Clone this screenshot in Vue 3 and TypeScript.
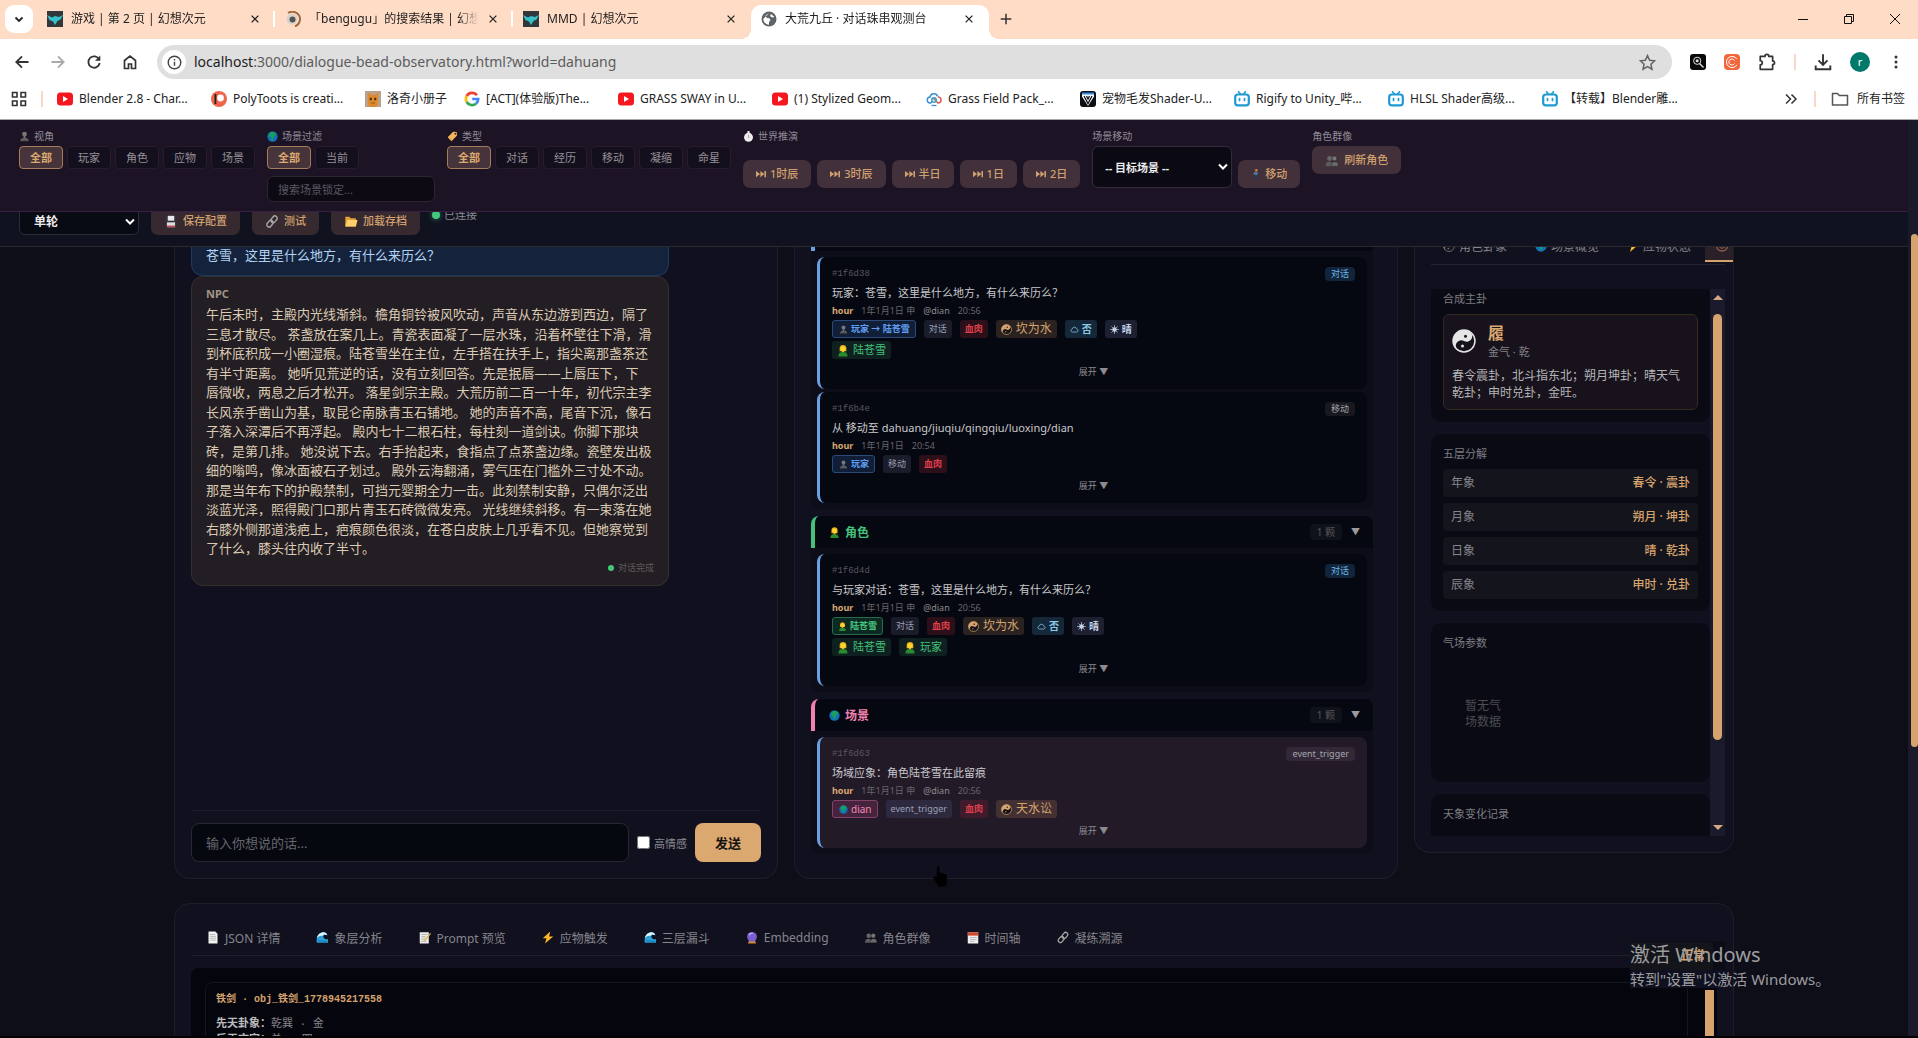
<script setup lang="ts">
interface BrowserTab { title: string; icon: string; active?: boolean }
interface Bookmark { title: string; icon: string; short?: boolean }
interface Chip { text: string; kind: string; icon?: string }
interface Bead {
  id: string
  tag: string
  tagKind: string
  title: string
  date: string
  place?: string
  time: string
  rows: Chip[][]
  scene?: boolean
}
interface BeadGroup { name: string; kind: string; icon?: string; count: string; beads: Bead[] }

const tabs: BrowserTab[] = [
  { title: '游戏 | 第 2 页 | 幻想次元', icon: 'fav-fish' },
  { title: '「bengugu」的搜索结果 | 幻想次元', icon: 'fav-swirl' },
  { title: 'MMD | 幻想次元', icon: 'fav-fish' },
  { title: '大荒九丘 · 对话珠串观测台', icon: 'fav-globe', active: true },
]

const bookmarks: Bookmark[] = [
  { title: 'Blender 2.8 - Char...', icon: 'bm-yt' },
  { title: 'PolyToots is creati...', icon: 'bm-patreon' },
  { title: '洛奇小册子', icon: 'bm-cat', short: true },
  { title: '[ACT](体验版)The...', icon: 'bm-google' },
  { title: 'GRASS SWAY in U...', icon: 'bm-yt' },
  { title: '(1) Stylized Geom...', icon: 'bm-yt' },
  { title: 'Grass Field Pack_...', icon: 'bm-cloud' },
  { title: '宠物毛发Shader-U...', icon: 'bm-shield' },
  { title: 'Rigify to Unity_哔...', icon: 'bm-bili' },
  { title: 'HLSL Shader高级...', icon: 'bm-bili' },
  { title: '【转载】Blender雕...', icon: 'bm-bili' },
]

const views = ['全部', '玩家', '角色', '应物', '场景']
const sceneFilters = ['全部', '当前']
const types = ['全部', '对话', '经历', '移动', '凝缩', '命星']
const steps = ['1时辰', '3时辰', '半日', '1日', '2日']

const story = `午后未时，主殿内光线渐斜。檐角铜铃被风吹动，声音从东边游到西边，隔了
三息才散尽。 茶盏放在案几上。青瓷表面凝了一层水珠，沿着杯壁往下滑，滑
到杯底积成一小圈湿痕。陆苍雪坐在主位，左手搭在扶手上，指尖离那盏茶还
有半寸距离。 她听见荒逆的话，没有立刻回答。先是抿唇——上唇压下，下
唇微收，两息之后才松开。 落星剑宗主殿。大荒历前二百一十年，初代宗主李
长风亲手凿山为基，取昆仑南脉青玉石铺地。 她的声音不高，尾音下沉，像石
子落入深潭后不再浮起。 殿内七十二根石柱，每柱刻一道剑诀。你脚下那块
砖，是第几排。 她没说下去。右手抬起来，食指点了点茶盏边缘。瓷壁发出极
细的嗡鸣，像冰面被石子划过。 殿外云海翻涌，雾气压在门槛外三寸处不动。
那是当年布下的护殿禁制，可挡元婴期全力一击。此刻禁制安静，只偶尔泛出
淡蓝光泽，照得殿门口那片青玉石砖微微发亮。 光线继续斜移。有一束落在她
右膝外侧那道浅疤上，疤痕颜色很淡，在苍白皮肤上几乎看不见。但她察觉到
了什么，膝头往内收了半寸。`

const groups: BeadGroup[] = [
  {
    name: '', kind: 'player', count: '', beads: [
      {
        id: '#1f6d38', tag: '对话', tagKind: 'talk', title: '玩家：苍雪，这里是什么地方，有什么来历么？',
        date: '1年1月1日 申', place: '@dian', time: '20:56',
        rows: [
          [
            { text: '玩家 → 陆苍雪', kind: 'blue', icon: 'bust' },
            { text: '对话', kind: 'plain' },
            { text: '血肉', kind: 'red' },
            { text: '坎为水', kind: 'gold', icon: 'yinyang' },
            { text: '否', kind: 'sky', icon: 'cloud' },
            { text: '晴', kind: 'sun', icon: 'sun' },
          ],
          [{ text: '陆苍雪', kind: 'leaf', icon: 'person' }],
        ],
      },
      {
        id: '#1f6b4e', tag: '移动', tagKind: 'move', title: '从 移动至 dahuang/jiuqiu/qingqiu/luoxing/dian',
        date: '1年1月1日', time: '20:54',
        rows: [[
          { text: '玩家', kind: 'blue', icon: 'bust' },
          { text: '移动', kind: 'plain' },
          { text: '血肉', kind: 'red' },
        ]],
      },
    ],
  },
  {
    name: '角色', kind: 'role', icon: 'person', count: '1 颗', beads: [
      {
        id: '#1f6d4d', tag: '对话', tagKind: 'talk', title: '与玩家对话：苍雪，这里是什么地方，有什么来历么？',
        date: '1年1月1日 申', place: '@dian', time: '20:56',
        rows: [
          [
            { text: '陆苍雪', kind: 'green', icon: 'person' },
            { text: '对话', kind: 'plain' },
            { text: '血肉', kind: 'red' },
            { text: '坎为水', kind: 'gold', icon: 'yinyang' },
            { text: '否', kind: 'sky', icon: 'cloud' },
            { text: '晴', kind: 'sun', icon: 'sun' },
          ],
          [
            { text: '陆苍雪', kind: 'leaf', icon: 'person' },
            { text: '玩家', kind: 'leaf', icon: 'person' },
          ],
        ],
      },
    ],
  },
  {
    name: '场景', kind: 'place', icon: 'globe', count: '1 颗', beads: [
      {
        id: '#1f6d63', tag: 'event_trigger', tagKind: 'event', title: '场域应象：角色陆苍雪在此留痕',
        date: '1年1月1日 申', place: '@dian', time: '20:56', scene: true,
        rows: [[
          { text: 'dian', kind: 'pink', icon: 'globe' },
          { text: 'event_trigger', kind: 'plain' },
          { text: '血肉', kind: 'red' },
          { text: '天水讼', kind: 'gold', icon: 'yinyang' },
        ]],
      },
    ],
  },
]

const layers = [
  { name: '年象', value: '春令 · 震卦' },
  { name: '月象', value: '朔月 · 坤卦' },
  { name: '日象', value: '晴 · 乾卦' },
  { name: '辰象', value: '申时 · 兑卦' },
]

const detailTabs = [
  { title: 'JSON 详情', icon: 'page' },
  { title: '象层分析', icon: 'wave' },
  { title: 'Prompt 预览', icon: 'memo' },
  { title: '应物触发', icon: 'bolt' },
  { title: '三层漏斗', icon: 'wave' },
  { title: 'Embedding', icon: 'crystal' },
  { title: '角色群像', icon: 'busts' },
  { title: '时间轴', icon: 'calendar' },
  { title: '凝练溯源', icon: 'link' },
]
</script>

<template>
  <div class="window">
    <svg class="sprite" aria-hidden="true">
      <symbol id="bust" viewBox="0 0 16 16"><circle cx="8" cy="4.5" r="3.5" fill="#777"/><path d="M6.5 7h3v3h-3z" fill="#777"/><path d="M2 15c0-4 2-5 6-5s6 1 6 5z" fill="#666"/><path d="M4 14.5h8" stroke="#222" stroke-width="1"/></symbol>
      <symbol id="busts" viewBox="0 0 16 16"><circle cx="5" cy="5.5" r="3" fill="#666"/><circle cx="11" cy="5.5" r="3" fill="#777" stroke="#222" stroke-width=".6"/><path d="M0 15c0-4 1.500-5.500 4.500-5.500S9 11 9 15z" fill="#5c5c5c"/><path d="M7 15c0-4 1.500-5.500 4.500-5.500S16 11 16 15z" fill="#6c6c6c" stroke="#222" stroke-width=".6"/></symbol>
      <symbol id="globe" viewBox="0 0 16 16"><circle cx="8" cy="8" r="7.500" fill="#1272b8"/><path d="M4 2.500c3-1.800 7-1 9 1.500l-1 3-2 1-1 4-2 2-1-5-3-2z" fill="#19a05a"/></symbol>
      <symbol id="tag" viewBox="0 0 16 16"><path d="M9 1l5 .5.5 5L6.500 15 1 9z" fill="#f5b75c"/><circle cx="12" cy="4" r="1.300" fill="#3a2630"/><path d="M4 9l3 3" stroke="#d88f3c" stroke-width="1.200"/></symbol>
      <symbol id="watch" viewBox="0 0 16 16"><path d="M6.500 0h3v3h-3z" fill="#eee"/><circle cx="8" cy="9.200" r="6.500" fill="#eee"/><path d="M8 5.500v4M8 9.500h1.500" stroke="#888" stroke-width="1"/></symbol>
      <symbol id="next" viewBox="0 0 16 16"><path d="M0 3l6.500 5L0 13zM7 3l6.500 5L7 13zM13.500 3H16v10h-2.500z" fill="currentColor"/></symbol>
      <symbol id="walk" viewBox="0 0 16 16"><circle cx="8.500" cy="2" r="1.900" fill="#d58a3c"/><path d="M6.500 4.500h4L10.500 10h-4z" fill="#2c7fc4"/><path d="M7 10L5.500 15.500M9.500 10l1.800 5.500" stroke="#26384f" stroke-width="2"/><path d="M6.500 5l-2 4" stroke="#d58a3c" stroke-width="1.400"/></symbol>
      <symbol id="floppy" viewBox="0 0 16 16"><path d="M1 1h12l2 2v12H1z" fill="#32303c"/><path d="M4 1h8v6H4z" fill="#e8e8e8"/><path d="M3 9h10v6H3z" fill="#dcdcdc"/><path d="M3 13h10v2H3z" fill="#c04b5a"/></symbol>
      <symbol id="link" viewBox="0 0 16 16"><g fill="none" stroke="#a9a9a9" stroke-width="1.700"><rect x="-2.800" y="-4.500" width="5.600" height="9" rx="2.800" transform="translate(10.500 5.300) rotate(40)"/><rect x="-2.800" y="-4.500" width="5.600" height="9" rx="2.800" transform="translate(5.500 10.700) rotate(40)"/></g></symbol>
      <symbol id="folder" viewBox="0 0 16 16"><path d="M1 2h5l1.500 2H14v10H1z" fill="#e2a138"/><path d="M3.500 6H16l-2 8H1z" fill="#ffd06b"/></symbol>
      <symbol id="yinyang" viewBox="0 0 16 16"><circle cx="8" cy="8" r="7.300" fill="#17131a" stroke="currentColor" stroke-width="1"/><path d="M8 .7a7.300 7.300 0 0 0 0 14.600 3.650 3.650 0 0 1 0-7.300A3.650 3.650 0 0 0 8 .7z" fill="currentColor" transform="rotate(30 8 8)"/><circle cx="9" cy="4.800" r="1" fill="#17131a"/><circle cx="7" cy="11.400" r="1" fill="currentColor"/></symbol>
      <symbol id="cloud" viewBox="0 0 16 16"><path d="M4 12.500a2.800 2.800 0 0 1 0-5.500 4 4 0 0 1 7.800 0 2.800 2.800 0 0 1 .5 5.500z" fill="none" stroke="currentColor" stroke-width="1.300"/></symbol>
      <symbol id="sun" viewBox="0 0 16 16"><circle cx="8" cy="8" r="4" fill="currentColor"/><path d="M8 0v16M0 8h16M2.500 2.500l11 11M13.500 2.500l-11 11" stroke="currentColor" stroke-width="1.200"/></symbol>
      <symbol id="person" viewBox="0 0 16 16"><path d="M3.500 5a4.500 4.500 0 0 1 9 0v4h-9z" fill="#e8a812"/><circle cx="8" cy="5.600" r="3.400" fill="#ffd735"/><path d="M6.700 8h2.600v3H6.700z" fill="#f2c52c"/><path d="M2 16c0-4.500 2-6 6-6s6 1.500 6 6z" fill="#2b8a2e"/></symbol>
      <symbol id="page" viewBox="0 0 16 16"><path d="M2 0h9l3 3v13H2z" fill="#f1f1f1"/><path d="M4 4h7M4 6.500h8M4 9h8M4 11.500h8" stroke="#a9a9a9" stroke-width="1"/></symbol>
      <symbol id="wave" viewBox="0 0 16 16"><path d="M1 15C0 7 4 1 10 1c3 0 5 2 5 4-3-2-6 0-5 3 1 2 4 3 6 2v5z" fill="#2a9fd8"/><path d="M1 9c1-5 5-8 9-8 3 0 5 2 5 4-3-2-6-1-6 1-3-1-6 0-8 3z" fill="#dff3fb"/><path d="M3 13c3-1 9 1 12 0" stroke="#1577b0" stroke-width="1.300" fill="none"/></symbol>
      <symbol id="memo" viewBox="0 0 16 16"><path d="M1 1h12v15H1z" fill="#eee"/><path d="M3 4h8M3 7h6M3 10h5M3 13h7" stroke="#999" stroke-width="1"/><path d="M15 2l-8 9-.5 2L9 12l7-9z" fill="#e9b24a"/></symbol>
      <symbol id="bolt" viewBox="0 0 16 16"><path d="M11 0L1 9h5l-2 7 11-9.500H9.500z" fill="#ffb829"/></symbol>
      <symbol id="crystal" viewBox="0 0 16 16"><path d="M4 12h8l1.500 4h-11z" fill="#c8873c"/><circle cx="8" cy="7" r="6.500" fill="#7a5fd0"/><path d="M4 5c1-2 3-3 5-2.500" stroke="#c9b8ff" stroke-width="1.500" fill="none"/></symbol>
      <symbol id="calendar" viewBox="0 0 16 16"><path d="M1 1h14v15H1z" fill="#eee"/><path d="M1 1h14v4.500H1z" fill="#d1492c"/><path d="M4 8h9M4 10.500h9M4 13h6" stroke="#bbb" stroke-width="1.300"/></symbol>

      <symbol id="fav-fish" viewBox="0 0 16 16"><path d="M0 0h16v16H0z" fill="#31383c"/><path d="M0 4l5 2.500L8 5l4 1 4-2-2.500 4.500-3 1.500L8 14l-2-3.500L2.500 9z" fill="#35c1c9"/></symbol>
      <symbol id="fav-swirl" viewBox="0 0 16 16"><circle cx="7" cy="8" r="5.500" fill="#d8d2cc"/><circle cx="7.500" cy="8.500" r="3" fill="#555"/><path d="M3 2C8-1 15 2 15 8c0 3-2 6-5 7.500" fill="none" stroke="#a5673b" stroke-width="2"/></symbol>
      <symbol id="fav-globe" viewBox="0 0 16 16"><circle cx="8" cy="8" r="7.500" fill="#5f6368"/><path d="M8 2.200c-1 1-3 1-3.500 3L6 7h2l1.500 2L8 11v2.800A6 6 0 0 1 2.200 8M10 3l-1 2 2 1.500 2.500-.5" fill="#fff"/></symbol>
      <symbol id="bm-yt" viewBox="0 0 16 16"><rect y="1.500" width="16" height="13" rx="3.500" fill="#f4171f"/><path d="M6 5l5 3-5 3z" fill="#fff"/></symbol>
      <symbol id="bm-patreon" viewBox="0 0 16 16"><circle cx="8" cy="8" r="8" fill="#f0644b"/><circle cx="9.500" cy="7" r="3.400" fill="#fff"/><path d="M3.500 3h1.800v10H3.500z" fill="#222"/></symbol>
      <symbol id="bm-cat" viewBox="0 0 16 16"><path d="M0 0h16v16H0z" fill="#b9a28b"/><path d="M3 1l3 3h4l3-3v13l-3 2H5l-2-2z" fill="#dd8a2c"/><path d="M5 7h1.500v2H5zM9.500 7H11v2H9.500zM6 12h4" fill="#4b2b12" stroke="#4b2b12" stroke-width=".5"/></symbol>
      <symbol id="bm-google" viewBox="0 0 16 16"><g fill="none" stroke-width="2.700"><path d="M13 4.200A6.200 6.200 0 0 0 2.700 5" stroke="#ea4335"/><path d="M2.700 5a6.300 6.300 0 0 0 0 6" stroke="#fbbc05"/><path d="M2.700 11A6.200 6.200 0 0 0 12 12.700" stroke="#34a853"/><path d="M12 12.700A6 6 0 0 0 14.200 8H8.200" stroke="#4285f4"/></g></symbol>
      <symbol id="bm-cloud" viewBox="0 0 16 16"><g fill="none" stroke-width="1.500"><path d="M7 10L4.500 12A3 3 0 0 1 4 6a4 4 0 0 1 7.700-.5" stroke="#3a8fd6"/><path d="M12 6a3 3 0 0 1 0 6L7 7" stroke="#e0565b"/><circle cx="8" cy="9" r="2.300" stroke="#35a3c5"/></g><path d="M5.500 14.500h5" stroke="#3a8fd6" stroke-width="1.300"/></symbol>
      <symbol id="bm-shield" viewBox="0 0 16 16"><rect width="16" height="16" rx="3" fill="#0c0f14"/><path d="M2 2.500h12v3L8 15 2 5.500z" fill="#fff"/><path d="M2 1.500h12v2H2z" fill="#2f89d6"/><path d="M4 5l4 7.500L12 5M6.500 5L8 8l1.500-3" fill="none" stroke="#0c0f14" stroke-width="1.300"/></symbol>
      <symbol id="bm-bili" viewBox="0 0 16 16"><path d="M4.500.8L6.500 3M11.500.8L9.500 3" stroke="#1d9bd1" stroke-width="1.600" stroke-linecap="round"/><rect x="1.200" y="3.500" width="13.600" height="10.800" rx="2.600" fill="none" stroke="#1d9bd1" stroke-width="2.200"/><path d="M5.500 7.500v2M10.500 7.500v2" stroke="#1d9bd1" stroke-width="1.700" stroke-linecap="round"/></symbol>
    </svg>

    <div class="tabstrip">
      <button class="tabsearch" aria-label="搜索标签页"><svg viewBox="0 0 16 16"><path d="M4.500 6.500L8 10l3.500-3.500" fill="none" stroke="#222" stroke-width="1.800"/></svg></button>
      <div v-for="(t, i) in tabs" :key="i" class="tab" :class="{ active: t.active, divided: i < 2 }">
        <svg class="fav"><use :href="'#' + t.icon" /></svg>
        <span class="tab-title">{{ t.title }}</span>
        <button class="tab-close" aria-label="关闭"><svg viewBox="0 0 16 16"><path d="M3.500 3.500l9 9M12.500 3.500l-9 9" stroke="#222" stroke-width="1.700"/></svg></button>
      </div>
      <button class="newtab" aria-label="新标签页"><svg viewBox="0 0 16 16"><path d="M8 2v12M2 8h12" stroke="#333" stroke-width="1.700"/></svg></button>
      <div class="wincontrols">
        <button aria-label="最小化"><svg viewBox="0 0 12 12"><path d="M1 6.500h10" stroke="#111" stroke-width="1"/></svg></button>
        <button aria-label="还原"><svg viewBox="0 0 12 12"><path d="M1.500 3.500h7v7h-7zM3.500 3.500v-2h7v7h-2" fill="none" stroke="#111" stroke-width="1"/></svg></button>
        <button aria-label="关闭窗口"><svg viewBox="0 0 12 12"><path d="M1 1l10 10M11 1L1 11" stroke="#111" stroke-width="1"/></svg></button>
      </div>
    </div>

    <div class="toolbar">
      <button class="nav" aria-label="后退"><svg viewBox="0 0 16 16"><path d="M14.500 8H2.500M8 2.300L2.300 8 8 13.700" fill="none" stroke="#333" stroke-width="1.800"/></svg></button>
      <button class="nav" aria-label="前进"><svg viewBox="0 0 16 16"><path d="M1.500 8h12M8 2.300L13.700 8 8 13.700" fill="none" stroke="#aaa" stroke-width="1.800"/></svg></button>
      <button class="nav" aria-label="刷新"><svg viewBox="0 0 16 16"><path d="M13.200 5.500A5.700 5.700 0 1 0 13.700 9" fill="none" stroke="#333" stroke-width="1.800"/><path d="M14.300 1.500v5.300H9z" fill="#333"/></svg></button>
      <button class="nav" aria-label="主页"><svg viewBox="0 0 16 16"><path d="M2.500 6.500L8 2l5.500 4.500v8h-4V10h-3v4.500h-4z" fill="none" stroke="#333" stroke-width="1.700"/></svg></button>
      <div class="urlbar">
        <span class="info"><svg viewBox="0 0 16 16"><circle cx="8" cy="8" r="6.700" fill="none" stroke="#444" stroke-width="1.500"/><path d="M8 7.200v4.300M8 4.300v1.600" stroke="#444" stroke-width="1.500"/></svg></span>
        <span class="url"><b>localhost</b>:3000/dialogue-bead-observatory.html?world=dahuang</span>
        <svg class="star" viewBox="0 0 16 16"><path d="M8 1.500l2 4.400 4.700.5-3.500 3.200 1 4.700L8 11.900l-4.200 2.400 1-4.700L1.300 6.400 6 5.900z" fill="none" stroke="#5f6368" stroke-width="1.400"/></svg>
      </div>
      <div class="exts">
        <svg viewBox="0 0 16 16"><rect width="16" height="16" rx="3" fill="#090909"/><circle cx="7.200" cy="6.800" r="3.600" fill="none" stroke="#ddd"/><circle cx="7.200" cy="6.800" r="1.500" fill="#ddd"/><path d="M9.500 9.500l4 4" stroke="#ddd" stroke-width="1.500"/></svg>
        <svg viewBox="0 0 16 16"><rect width="16" height="16" rx="4" fill="#f2683c"/><path d="M12.800 5a5.600 5.600 0 1 0 0 6" fill="none" stroke="#fff"/><path d="M10.500 6.500a3 3 0 1 0 0 3" fill="none" stroke="#fff"/></svg>
        <svg class="big" viewBox="0 0 16 16"><path d="M2 3h4.200a1.700 1.700 0 0 1 3.400 0H13v4a1.700 1.700 0 0 1 0 3.400V14.500H2v-4a1.800 1.800 0 0 0 0-3.600z" fill="none" stroke="#333" stroke-width="1.500" stroke-linejoin="round"/></svg>
        <i class="vsep"></i>
        <svg class="big" viewBox="0 0 16 16"><path d="M8 1v9M4 6.500l4 4 4-4M1.500 11v3.500h13V11" fill="none" stroke="#333" stroke-width="1.700"/></svg>
        <span class="avatar">r</span>
        <svg viewBox="0 0 16 16"><circle cx="8" cy="3" r="1.500" fill="#333"/><circle cx="8" cy="8" r="1.500" fill="#333"/><circle cx="8" cy="13" r="1.500" fill="#333"/></svg>
      </div>
    </div>

    <nav class="bookmarks">
      <svg class="apps" viewBox="0 0 16 16"><path d="M1.500 1.500h4.500v4.500H1.500zM10 1.500h4.500v4.500H10zM1.500 10h4.500v4.500H1.500zM10 10h4.500v4.500H10z" fill="none" stroke="#333" stroke-width="1.600"/></svg>
      <i class="vsep"></i>
      <a v-for="(b, i) in bookmarks" :key="i" href="#" class="bookmark" :class="{ short: b.short }"><svg><use :href="'#' + b.icon" /></svg><span>{{ b.title }}</span></a>
      <div class="bookmarks-end">
        <svg class="more" viewBox="0 0 16 16"><path d="M3 3.500L7.500 8 3 12.500M8.500 3.500L13 8l-4.500 4.500" fill="none" stroke="#333" stroke-width="1.500"/></svg>
        <i class="vsep"></i>
        <a href="#" class="all"><svg viewBox="0 0 18 16"><path d="M1.500 2.500h5l1.800 2h8.200v9.500h-15z" fill="none" stroke="#555" stroke-width="1.500" stroke-linejoin="round"/></svg><span>所有书签</span></a>
      </div>
    </nav>

    <div class="viewport">
      <div class="page">
        <header class="filters">
          <div class="group">
            <div class="label"><svg><use href="#bust" /></svg>视角</div>
            <div class="chips"><button v-for="(v, i) in views" :key="v" class="pick" :class="{ on: i === 0 }">{{ v }}</button></div>
          </div>
          <div class="group">
            <div class="label"><svg><use href="#globe" /></svg>场景过滤</div>
            <div class="chips"><button v-for="(v, i) in sceneFilters" :key="v" class="pick" :class="{ on: i === 0 }">{{ v }}</button></div>
            <input class="search" type="text" placeholder="搜索场景锁定..." aria-label="搜索场景锁定" />
          </div>
          <div class="group">
            <div class="label"><svg><use href="#tag" /></svg>类型</div>
            <div class="chips"><button v-for="(v, i) in types" :key="v" class="pick" :class="{ on: i === 0 }">{{ v }}</button></div>
          </div>
          <div class="group">
            <div class="label"><svg><use href="#watch" /></svg>世界推演</div>
            <div class="actions tall"><button v-for="s in steps" :key="s" class="act"><svg><use href="#next" /></svg>{{ s }}</button></div>
          </div>
          <div class="group">
            <label class="label" for="target">场景移动</label>
            <div class="actions tall">
              <div class="select wide"><select id="target"><option>-- 目标场景 --</option></select><svg viewBox="0 0 10 8"><path d="M1 1.500l4 4 4-4" fill="none" stroke="#fff" stroke-width="2"/></svg></div>
              <button class="act"><svg><use href="#walk" /></svg>移动</button>
            </div>
          </div>
          <div class="group">
            <div class="label">角色群像</div>
            <div class="actions"><button class="act"><svg class="lg"><use href="#busts" /></svg>刷新角色</button></div>
          </div>
        </header>

        <div class="configbar">
          <div class="configrow">
            <div class="select mode"><select aria-label="对话模式"><option>单轮</option></select><svg viewBox="0 0 10 8"><path d="M1 1.500l4 4 4-4" fill="none" stroke="#fff" stroke-width="2"/></svg></div>
            <button class="act"><svg class="lg"><use href="#floppy" /></svg>保存配置</button>
            <button class="act"><svg class="lg"><use href="#link" /></svg>测试</button>
            <button class="act"><svg class="lg"><use href="#folder" /></svg>加载存档</button>
            <span class="status"><i></i>已连接</span>
          </div>
        </div>

        <main>
          <div class="columns">
            <section class="panel chat">
              <div class="bubble user">苍雪，这里是什么地方，有什么来历么？</div>
              <div class="bubble npc">
                <div class="who">NPC</div>
                <p>{{ story }}</p>
                <div class="done"><i></i>对话完成</div>
              </div>
              <form class="composer" @submit.prevent>
                <input class="say" type="text" placeholder="输入你想说的话..." aria-label="对话内容" />
                <label class="emo"><input type="checkbox" />高情感</label>
                <button class="send">发送</button>
              </form>
            </section>

            <section class="panel beads">
              <div v-for="g in groups" :key="g.kind" class="beadgroup" :class="g.kind">
                <div class="ghead">
                  <template v-if="g.name">
                    <svg><use :href="'#' + g.icon" /></svg>
                    <span class="gname">{{ g.name }}</span>
                    <span class="gcount">{{ g.count }}</span>
                    <span class="arrow">▼</span>
                  </template>
                </div>
                <div class="gbody">
                  <article v-for="b in g.beads" :key="b.id" class="bead" :class="{ scene: b.scene }">
                    <div class="bhead"><span class="bid">{{ b.id }}</span><span class="btag" :class="b.tagKind">{{ b.tag }}</span></div>
                    <div class="btitle">{{ b.title }}</div>
                    <div class="bmeta"><b>hour</b><span>{{ b.date }}</span><span v-if="b.place" class="at">{{ b.place }}</span><span>{{ b.time }}</span></div>
                    <div v-for="(row, r) in b.rows" :key="r" class="brow">
                      <span v-for="(c, k) in row" :key="k" class="chip" :class="c.kind"><svg v-if="c.icon"><use :href="'#' + c.icon" /></svg>{{ c.text }}</span>
                    </div>
                    <button class="expand">展开 ▼</button>
                  </article>
                </div>
              </div>
            </section>

            <aside class="panel side">
              <div class="sidetabs">
                <button><svg><use href="#yinyang" /></svg>角色卦象</button>
                <button><svg><use href="#globe" /></svg>场景概览</button>
                <button><svg><use href="#bolt" /></svg>应物状态</button>
                <button class="current" aria-label="天象"><svg viewBox="0 0 16 16"><path d="M1 8c0 9 14 9 14 0" fill="none" stroke="#8d5b4a" stroke-width="2"/><path d="M4 8c2 4 6 4 8 0" fill="none" stroke="#8d5b4a" stroke-width="1.500"/></svg></button>
              </div>
              <div class="scroll">
                <div class="cards">
                  <div class="card first">
                    <h3>合成主卦</h3>
                    <div class="hexagram">
                      <div class="hexhead"><svg><use href="#yinyang" /></svg><div><strong>履</strong><span>金气 · 乾</span></div></div>
                      <p>春令震卦，北斗指东北；朔月坤卦；晴天气乾卦；申时兑卦，金旺。</p>
                    </div>
                  </div>
                  <div class="card">
                    <h3>五层分解</h3>
                    <dl><div v-for="l in layers" :key="l.name"><dt>{{ l.name }}</dt><dd>{{ l.value }}</dd></div></dl>
                  </div>
                  <div class="card field">
                    <h3>气场参数</h3>
                    <p class="empty">暂无气场数据</p>
                  </div>
                  <div class="card last"><h3>天象变化记录</h3></div>
                </div>
                <div class="track"><i class="up"></i><i class="thumb"></i><i class="down"></i></div>
              </div>
            </aside>
          </div>

          <section class="panel detail">
            <div class="detailtabs"><button v-for="d in detailTabs" :key="d.title"><svg><use :href="'#' + d.icon" /></svg>{{ d.title }}</button></div>
            <div class="detailbox">
              <div class="object">
                <div class="oname">铁剑 · obj_铁剑_1778945217558</div>
                <div><b>先天卦象：</b>乾巽 · 金</div>
                <div><b>后天方宫：</b>兑 · 四</div>
              </div>
              <div class="dtrack"><i></i></div>
            </div>
          </section>
        </main>
      </div>
      <div class="pagetrack"><i></i></div>
    </div>

    <svg class="cursor" viewBox="0 0 16 21"><path d="M4 1.500c0-2 2.500-2 2.500 0V8l1-1.500c1 0 1.500.5 1.500 1.500l.5-1c1.500 0 1.800.8 1.800 1.800l.5-.8c1.500 0 2 .8 2 2.500V15c0 2-1 3-1 5.500H5C5 18 1.500 15 .5 12c-.5-2 1.500-2.500 3-.5z" fill="#000"/></svg>

    <div class="overlay">
      <span class="normal">正常</span>
      <div class="mark1">激活 Windows</div>
      <div class="mark2">转到"设置"以激活 Windows。</div>
    </div>
  </div>
</template>

<style>
html, body { margin: 0; background: #000; overflow: hidden; }
</style>

<style scoped>
* { box-sizing: border-box; }
.window { position: relative; display: flex; flex-direction: column; height: 100vh; overflow: hidden; border-bottom: 2px solid #000; background: #0e0e19; color: #bbb; font-family: "Noto Sans", "Noto Sans CJK SC", sans-serif; font-size: 12px; }
button, input, select { font-family: inherit; margin: 0; }
button { border: 0; padding: 0; background: none; color: inherit; cursor: pointer; }
a { color: inherit; text-decoration: none; }
svg { display: block; flex: none; }
.sprite { position: absolute; width: 0; height: 0; }

/* browser frame */
.tabstrip { display: flex; flex: none; height: 39px; padding: 5px 0 0 5px; background: #ffdcc6; color: #222; }
.tabsearch { display: flex; align-items: center; justify-content: center; width: 28px; height: 28px; margin-right: 4px; border-radius: 9px; background: #fff; }
.tabsearch svg { width: 16px; height: 16px; }
.tab { position: relative; display: flex; align-items: center; width: 238px; height: 28px; padding: 0 14px 0 10px; }
.tab.divided::after { content: ""; width: 2px; height: 16px; margin-left: 12px; margin-right: -14px; background: #fff; }
.tab.active { height: 34px; padding-bottom: 6px; background: #fff; border-radius: 10px 10px 0 0; }
.tab.active::before, .tab.active::after { content: ""; position: absolute; bottom: 0; width: 10px; height: 10px; }
.tab.active::before { left: -10px; background: radial-gradient(circle at 0 0, #ffdcc6 10px, #fff 10px); }
.tab.active::after { right: -10px; background: radial-gradient(circle at 100% 0, #ffdcc6 10px, #fff 10px); }
.fav { width: 16px; height: 16px; margin-right: 8px; }
.tab-title { flex: 1; overflow: hidden; white-space: nowrap; line-height: 18px; mask-image: linear-gradient(90deg, #000 88%, transparent); }
.tab-close { margin-left: 8px; }
.tab-close svg { width: 12px; height: 12px; }
.newtab { width: 16px; height: 28px; margin-left: 10px; }
.newtab svg { width: 14px; height: 14px; }
.wincontrols { display: flex; margin-left: auto; height: 28px; }
.wincontrols button { display: flex; align-items: center; justify-content: center; width: 46px; }
.wincontrols svg { width: 12px; height: 12px; }
.toolbar { display: flex; flex: none; align-items: center; height: 46px; padding: 0 14px 0 4px; background: #fff; }
.nav { display: flex; align-items: center; justify-content: center; width: 36px; height: 34px; }
.nav svg { width: 16px; height: 16px; }
.urlbar { display: flex; flex: 1; align-items: center; height: 34px; margin-left: 9px; padding: 0 16px 0 5px; border-radius: 17px; background: #dfdfdf; color: #5c5c5c; font-size: 14px; line-height: 18px; }
.info { display: flex; align-items: center; justify-content: center; width: 24px; height: 24px; margin-right: 8px; border-radius: 12px; background: #fff; }
.info svg { width: 15px; height: 15px; }
.url { flex: 1; }
.url b { font-weight: 400; color: #222; }
.star { width: 17px; height: 17px; }
.exts { display: flex; align-items: center; gap: 18px; margin-left: 18px; }
.exts svg { width: 16px; height: 16px; }
.exts .big { width: 18px; height: 18px; }
.vsep { width: 2px; height: 16px; background: #f8d8c6; }
.avatar { width: 20px; height: 20px; border-radius: 10px; background: #00796b; color: #fff; font-size: 11px; line-height: 19px; text-align: center; }
.bookmarks { display: flex; flex: none; align-items: center; height: 35px; padding: 0 13px 6px 11px; border-bottom: 1px solid #aaa; background: #fff; color: #222; }
.bookmarks svg { width: 16px; height: 16px; }
.bookmarks > .vsep { margin: 0 14px; }
.bookmark { display: flex; gap: 6px; width: 154px; white-space: nowrap; line-height: 16px; }
.bookmark.short { width: 99px; }
.bookmarks-end { display: flex; align-items: center; gap: 15px; margin-left: auto; }
.all { display: flex; gap: 8px; line-height: 16px; }
.all svg { width: 18px; }

/* page */
.viewport { display: flex; flex: 1; min-height: 0; }
.page { display: flex; flex: 1; flex-direction: column; min-width: 0; overflow: hidden; }
.pagetrack { width: 10px; padding: 114px 0 0 3px; background: #1a1a2a; }
.pagetrack i { display: block; height: 64%; border-radius: 4px; background: #d6a36e; }
.filters { display: flex; flex: none; gap: 12px; padding: 9px 19px 9px; border-bottom: 1px solid #371f40; background: #1c1425; }
.label { display: flex; align-items: center; gap: 4px; height: 14px; margin-bottom: 3px; color: #918b96; font-size: 10px; line-height: 14px; }
.label svg { width: 11px; height: 11px; }
.chips { display: flex; gap: 4px; }
.pick { width: 44px; height: 23px; border: 1px solid #261c2e; border-radius: 4px; background: #140f1c; color: #948f98; font-size: 11px; line-height: 20px; }
.pick.on { border-color: #a47c59; background: #47343a; color: #dba870; font-weight: 700; }
.search { display: block; width: 168px; height: 26px; margin-top: 7px; padding: 0 10px; border: 1px solid #2c2534; border-radius: 6px; background: #0d0a14; color: #ccc; font-size: 11px; }
.search::placeholder { color: #5b5660; opacity: 1; }
.actions { display: flex; align-items: flex-end; gap: 6px; }
.actions.tall { height: 42px; }
.act { display: flex; align-items: center; gap: 4px; height: 28px; padding: 0 13px; border-radius: 7px; background: #42303a; color: #d0a06f; font-size: 11px; font-weight: 500; line-height: 28px; white-space: nowrap; }
.act svg { width: 10px; height: 10px; }
.act svg.lg { width: 14px; height: 13px; margin-right: 1px; }
.select { position: relative; height: 42px; }
.select select { width: 100%; height: 100%; padding: 0 12px; appearance: none; border: 1px solid #332c38; border-radius: 6px; background: #0b0a14; color: #eee; font-size: 11px; font-weight: 700; }
.select svg { position: absolute; right: 4px; top: 17px; width: 10px; height: 8px; }
.select.wide { width: 140px; }
.select.mode { width: 120px; height: 28px; }
.select.mode select { padding: 0 14px; border-color: #2c2c38; background: #080a14; font-size: 12px; }
.select.mode svg { top: 11px; }
.configbar { display: flex; flex: none; align-items: flex-end; height: 35px; padding: 0 19px 11px; border-bottom: 1px solid #2a2a2c; background: #111220; overflow: hidden; }
.configrow { display: flex; align-items: flex-end; gap: 12px; height: 41px; }
.configbar .act { background: #36292f; }
.status { display: flex; align-items: center; align-self: center; gap: 4px; color: #8c8c93; font-size: 11px; line-height: 16px; }
.status i { width: 8px; height: 8px; border-radius: 4px; background: #43c880; box-shadow: 0 0 5px #2b8557; }

main { flex: 1; min-height: 0; width: 100%; max-width: 1560px; margin: 0 auto; overflow: hidden; }
.columns { display: grid; grid-template-columns: 1fr 1fr 320px; gap: 16px; }
.panel { min-width: 0; border: 1px solid #1e1e2b; border-radius: 16px; background: #11101f; }
.columns .panel { border-top: 0; border-radius: 0 0 16px 16px; }

.chat { display: flex; flex-direction: column; padding: 0 16px 16px; }
.bubble { width: 478px; max-width: 100%; padding: 0 14px; border: 1px solid #35302f; border-radius: 12px; font-size: 13px; }
.user { height: 29px; border-color: #1c3a60; border-top: 0; border-radius: 0 0 12px 12px; background: #14233b; color: #b3d3f5; line-height: 16px; }
.npc { padding-top: 9px; padding-bottom: 7px; background: #231e23; color: #dccbb4; }
.who { color: #a2968b; font-size: 11px; font-weight: 700; line-height: 16px; margin-bottom: 3px; }
.npc p { margin: 0; line-height: 1.5; white-space: pre; }
.done { display: flex; align-items: center; justify-content: flex-end; gap: 4px; margin: 2px 0 3px; color: #5e5a5c; font-size: 9px; line-height: 14px; }
.done i { width: 6px; height: 6px; border-radius: 3px; background: #43c880; }
.composer { display: flex; align-items: center; gap: 8px; margin-top: auto; padding-top: 12px; border-top: 1px solid #1b1e2e; }
.say { flex: 1; min-width: 0; height: 39px; padding: 0 14px; border: 1px solid #26272f; border-radius: 8px; background: #060810; color: #ccc; font-size: 13px; }
.say::placeholder { color: #66676c; opacity: 1; }
.emo { display: flex; align-items: center; gap: 4px; color: #8a8a90; font-size: 11px; }
.emo input { width: 13px; height: 13px; }
.send { width: 66px; height: 39px; border-radius: 8px; background: #dba870; color: #151210; font-size: 13px; font-weight: 700; }

.beads { padding: 0 24px 24px 16px; }
.beadgroup { margin-bottom: 7px; border-radius: 8px; background: #0d0d19; }
.beadgroup:last-child { margin-bottom: 0; }
.ghead { display: flex; align-items: center; height: 32px; padding: 0 13px 0 14px; border-left: 4px solid; border-radius: 8px 8px 0 0; background: #060811; }
.player .ghead { height: 4px; border-color: #6c9fe0; border-radius: 0; }
.role .ghead { border-color: #45c17c; }
.place .ghead { border-color: #f281b0; }
.ghead svg { width: 11px; height: 13px; margin-right: 5px; }
.gname { font-size: 12px; font-weight: 700; color: #45c17c; }
.place .gname { color: #f281b0; }
.gcount { margin-left: auto; padding: 0 7px; border-radius: 4px; background: #10121a; color: #56575c; font-size: 10px; line-height: 16px; }
.arrow { margin-left: 9px; color: #9b9b9f; font-size: 9px; line-height: 16px; }
.gbody { display: flex; flex-direction: column; gap: 3px; padding: 6px; }
.bead { padding: 10px 12px 11px; border-left: 3px solid #6c9fe0; border-radius: 8px; background: #060811; }
.bead.scene { background: #231a28; }
.bhead { display: flex; align-items: center; justify-content: space-between; height: 14px; }
.bid { color: #56575c; font-family: "Liberation Mono", monospace; font-size: 9px; }
.btag { padding: 0 6px; border-radius: 4px; background: #181920; color: #a6a6aa; font-size: 9px; line-height: 14px; }
.btag.talk { background: #11243a; color: #6fb7e6; }
.btag.event { background: #322837; }
.btitle { margin-top: 4px; color: #c9c9cc; font-size: 11px; line-height: 16px; white-space: nowrap; }
.bmeta { display: flex; gap: 8px; margin: 4px 0 3px; color: #66666b; font-size: 9px; line-height: 12px; }
.bmeta b { color: #dba870; }
.at { color: #8b8b90; }
.brow { display: flex; gap: 8px; margin-bottom: 3px; }
.chip { display: flex; align-items: center; gap: 3px; height: 18px; padding: 0 5px; border-radius: 3px; background: #1a1c29; color: #9aa0b4; font-size: 9px; line-height: 16px; white-space: nowrap; }
.chip svg { width: 9px; height: 9px; }
.chip.blue { padding: 0 5px 0 6px; border: 1px solid #2b4a78; background: #101e38; color: #5f9df0; font-weight: 700; }
.chip.green { padding: 0 5px; border: 1px solid #276b48; background: #0d2a22; color: #45c17c; font-weight: 700; }
.chip.pink { padding: 0 5px 0 6px; border: 1px solid #84426b; background: #45233c; color: #f08ab5; font-size: 10px; }
.chip.red { background: #2b0f19; color: #e0404c; font-weight: 700; }
.chip.gold { gap: 4px; background: #2a2220; color: #d6a36e; font-size: 12px; }
.chip.gold svg { width: 11px; height: 11px; }
.chip.sky { background: #14283a; color: #8cc8e8; font-size: 10px; font-weight: 700; }
.chip.sun { background: #1d2030; color: #c4d4ea; font-size: 10px; font-weight: 700; }
.chip.leaf { gap: 4px; background: #0e201f; color: #45c17c; font-size: 11px; }
.chip.leaf svg { width: 12px; height: 13px; }
.scene .chip.plain { background: #2d2a40; }
.scene .chip.red { background: #3f1b2c; }
.scene .chip.gold { background: #423033; }
.expand { display: block; margin: 6px auto 0; color: #8b8b90; font-size: 9px; line-height: 13px; }

.side { align-self: start; padding: 0 8px 16px 16px; overflow: hidden; }
.sidetabs { display: flex; gap: 2px; height: 18px; padding-left: 12px; border-bottom: 1px solid #24232f; color: #85858b; }
.sidetabs button { display: flex; flex: none; align-items: flex-start; gap: 4px; height: 15px; padding-right: 26px; overflow: hidden; font-size: 12px; line-height: 0; }
.sidetabs svg { width: 12px; height: 12px; margin-top: -7px; }
.sidetabs .current { flex: 1; margin-left: -14px; margin-right: -8px; padding: 0 0 0 11px; border-bottom: 2px solid #d6a36e; background: #2a2028; }
.scroll { display: flex; height: 547px; margin-top: 24px; overflow: hidden; }
.cards { flex: 1; min-width: 0; }
.card { margin-bottom: 12px; padding: 12px; border-radius: 10px; background: #0a0a14; }
.card.first { padding-top: 2px; border-radius: 0 0 10px 10px; }
.card.last { margin: 0; height: 60px; }
.card h3 { margin: 0 0 7px; color: #7d7d82; font-size: 11px; font-weight: 400; line-height: 16px; }
.hexagram { padding: 7px 8px 8px; border: 1px solid #33291f; border-radius: 6px; background: #17121b; }
.hexhead { display: flex; align-items: center; gap: 12px; }
.hexhead > svg { width: 24px; height: 24px; color: #e6e6e6; }
.hexhead strong { display: block; color: #dba870; font-size: 16px; line-height: 22px; }
.hexhead span { display: block; color: #838388; font-size: 11px; line-height: 16px; }
.hexagram p { margin: 7px 0 0; color: #b5b5b8; font-size: 12px; line-height: 17px; }
dl { display: flex; flex-direction: column; gap: 6px; margin: 0; }
dl div { display: flex; justify-content: space-between; height: 28px; padding: 0 8px; border-radius: 4px; background: #14141c; line-height: 28px; }
dt { color: #85858a; }
dd { margin: 0; color: #d6a36e; font-weight: 500; }
.field { height: 159px; }
.empty { width: 36px; margin: 47px 0 0 22px; color: #4c4c52; font-size: 12px; line-height: 16px; }
.track { display: flex; flex-direction: column; align-items: center; width: 15px; padding: 6px 0; background: #1a1a2c; }
.up, .down { border: 5px solid transparent; border-top: 0; border-bottom-color: #d6a882; }
.down { margin-top: auto; border-top: 5px solid #d6a882; border-bottom: 0; }
.thumb { width: 9px; height: 426px; margin-top: 14px; border-radius: 5px; background: #d6a36e; }

.detail { margin-top: 24px; padding: 16px 16px 0; }
.detailtabs { display: flex; gap: 4px; border-bottom: 1px solid #20202c; }
.detailtabs button { display: flex; align-items: center; gap: 6px; height: 35px; padding: 0 16px; color: #85858b; font-size: 12px; white-space: nowrap; }
.detailtabs svg { width: 12px; height: 13px; }
.detailbox { display: flex; justify-content: space-between; height: 200px; margin-top: 12px; border-radius: 8px; background: #05060d; }
.object { flex: 1; margin: 14px 17px 0 14px; padding: 9px 10px; border: 1px solid #15161f; border-radius: 8px; color: #85858a; font-family: "Liberation Mono", "Noto Sans CJK SC", monospace; font-size: 11px; line-height: 16px; }
.object b { color: #bcbcbe; }
.oname { margin-bottom: 8px; color: #d6a36e; font-size: 10px; font-weight: 700; }
.dtrack { width: 12px; padding: 22px 3px 0 0; }
.dtrack i { display: block; height: 178px; background: #d6a36e; }

/* things floating over the window */
.cursor { position: absolute; left: 933px; top: 866px; width: 16px; height: 21px; }
.overlay { position: absolute; right: 88px; bottom: 48px; width: 200px; height: 47px; color: #9d9d9f; white-space: nowrap; background: linear-gradient(#0c0c16, #0c0c16) 0 0 / 95px 29px no-repeat, linear-gradient(#101120, #101120) 0 29px / 95px 18px no-repeat; }
.normal { position: absolute; left: 0; top: 1px; width: 83px; padding-right: 8px; border-radius: 0 4px 4px 0; background: #14141b; color: #d6a36e; font-size: 12px; font-weight: 700; line-height: 28px; text-align: right; }
.mark1 { position: relative; font-size: 20px; line-height: 28px; }
.mark2 { position: relative; font-size: 15px; line-height: 20px; }
</style>
